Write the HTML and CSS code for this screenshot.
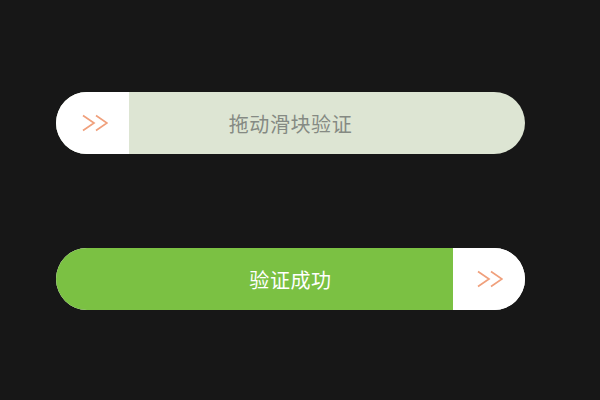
FILE: index.html
```html
<!DOCTYPE html>
<html lang="zh">
<head>
<meta charset="utf-8">
<link rel="stylesheet" href="styles.css">
</head>
<body>
<div class="page">
  <div class="slider pending">
    <div class="handle left">
      <svg width="26" height="18" viewBox="0 0 26 18"><path d="M1 1.5 L12 9 L1 16.5 M14 1.5 L25 9 L14 16.5" fill="none" stroke="#f0a07c" stroke-width="1.7"/></svg>
    </div>
    <div class="label grey">拖动滑块验证</div>
  </div>
  <div class="slider done">
    <div class="fill"></div>
    <div class="handle right">
      <svg width="26" height="18" viewBox="0 0 26 18"><path d="M1 1.5 L12 9 L1 16.5 M14 1.5 L25 9 L14 16.5" fill="none" stroke="#f0a07c" stroke-width="1.7"/></svg>
    </div>
    <div class="label white">验证成功</div>
  </div>
</div>
</body>
</html>
```
FILE: styles.css
```css
html, body { margin: 0; padding: 0; }
body {
  background: #171717;
  width: 600px;
  height: 400px;
  overflow: hidden;
  font-family: "Noto Sans CJK SC", "Noto Sans", sans-serif;
}
.page {
  padding: 92px 0 0 56px;
  display: flex;
  flex-direction: column;
  gap: 94px;
}
.slider {
  position: relative;
  width: 469px;
  height: 62px;
  border-radius: 31px;
  overflow: hidden;
  display: flex;
}
.pending { background: #dde5d3; }
.done { background: #ffffff; }
.handle {
  width: 73px;
  height: 62px;
  background: #ffffff;
  display: flex;
  align-items: center;
  justify-content: center;
}
.handle.left svg { margin-left: 4px; }
.handle.right svg { margin-left: 2px; }
.fill {
  width: 397px;
  height: 62px;
  background: #7bc143;
}
.handle.right { width: 72px; }
.label {
  position: absolute;
  left: 0;
  right: 0;
  top: 0;
  bottom: 0;
  display: flex;
  align-items: center;
  justify-content: center;
  font-size: 20px;
  letter-spacing: 0.6px;
}
.grey { color: #858a83; }
.white { color: #ffffff; }
```
